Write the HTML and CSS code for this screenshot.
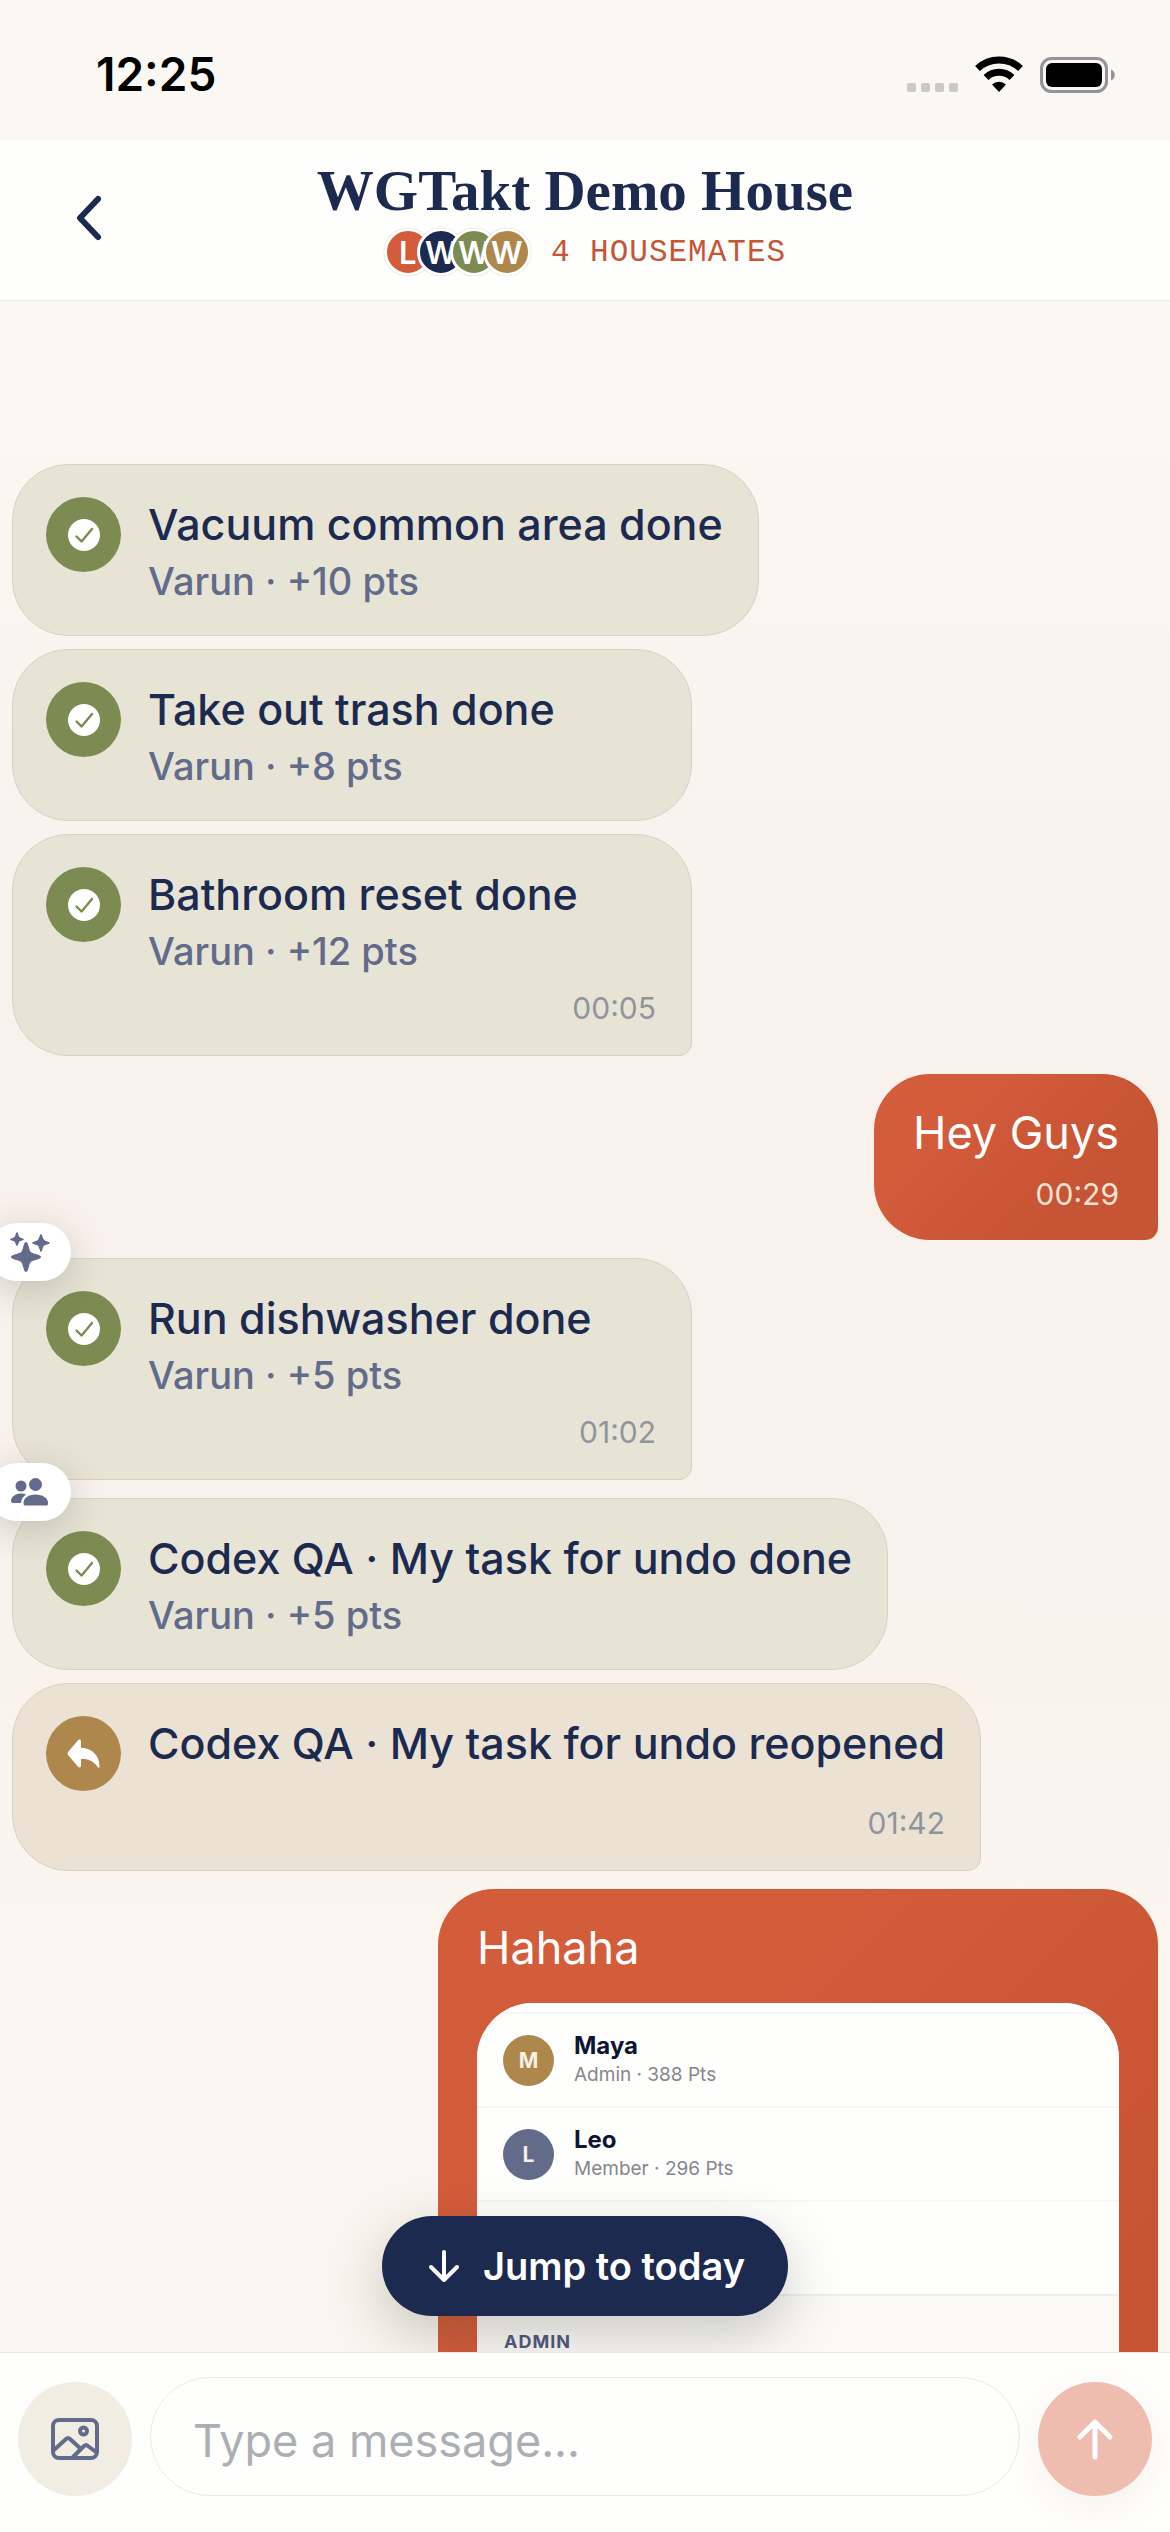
FILE: index.html
```html
<!DOCTYPE html>
<html lang="en">
<head>
    <meta charset="UTF-8">
    <meta name="viewport" content="width=device-width, initial-scale=1.0">
    <title>WGTakt Demo House</title>
    <link rel="stylesheet" href="styles.css">
</head>
<body>
    <!-- shared icons -->
    <svg class="sprite" aria-hidden="true">
        <symbol id="icon-check" viewBox="0 0 32 32">
            <circle cx="16" cy="16" r="16" fill="#fff"/>
            <path d="M8.500 17.500l5 5L24 10" fill="none" stroke="#7b8b52" stroke-width="2.400" stroke-linecap="round" stroke-linejoin="round"/>
        </symbol>
    </svg>

    <div class="status-bar">
        <span class="clock">12:25</span>
        <svg class="status-icons" width="208" height="38" viewBox="0 0 208 38" aria-hidden="true">
            <g fill="#cbc9c3">
                <rect x="0" y="28" width="9" height="9" rx="2"/>
                <rect x="14" y="28" width="9" height="9" rx="2"/>
                <rect x="28" y="28" width="9" height="9" rx="2"/>
                <rect x="42" y="28" width="9" height="9" rx="2"/>
            </g>
            <path d="M92 37l-7-7.500a10 10 0 0 1 14 0z" fill="#000"/>
            <path d="M79 22.500a19 19 0 0 1 26 0" fill="none" stroke="#000" stroke-width="7"/>
            <path d="M70.500 13.500a31.500 31.500 0 0 1 43 0" fill="none" stroke="#000" stroke-width="7"/>
            <rect x="134.500" y="3.500" width="65" height="33" rx="10" fill="none" stroke="#92949a" stroke-width="3"/>
            <rect x="139" y="8" width="56" height="24" rx="6" fill="#000"/>
            <path d="M204 14.500c5 2 5 9 0 11z" fill="#92949a"/>
        </svg>
    </div>

    <header class="chat-header">
        <button class="back-btn" type="button" aria-label="Back">
            <svg width="28" height="48" viewBox="0 0 28 48"><path d="M23 5L5 24l18 19" fill="none" stroke="#1c2a4f" stroke-width="6" stroke-linecap="round" stroke-linejoin="round"/></svg>
        </button>
        <div class="house">
            <h1>WGTakt Demo House</h1>
            <div class="members">
                <div class="avatars">
                    <span class="avatar avatar-red">L</span>
                    <span class="avatar avatar-navy">W</span>
                    <span class="avatar avatar-green">W</span>
                    <span class="avatar avatar-gold">W</span>
                </div>
                <span class="member-count">4 HOUSEMATES</span>
            </div>
        </div>
    </header>

    <main class="chat">
        <div class="group">
            <article class="bubble task">
                <div class="task-row">
                    <span class="task-icon"><svg width="32" height="32"><use href="#icon-check"/></svg></span>
                    <div>
                        <p class="task-title">Vacuum common area done</p>
                        <p class="task-meta">Varun · +10 pts</p>
                    </div>
                </div>
            </article>
            <article class="bubble task">
                <div class="task-row">
                    <span class="task-icon"><svg width="32" height="32"><use href="#icon-check"/></svg></span>
                    <div>
                        <p class="task-title">Take out trash done</p>
                        <p class="task-meta">Varun · +8 pts</p>
                    </div>
                </div>
            </article>
            <article class="bubble task last">
                <div class="task-row">
                    <span class="task-icon"><svg width="32" height="32"><use href="#icon-check"/></svg></span>
                    <div>
                        <p class="task-title">Bathroom reset done</p>
                        <p class="task-meta">Varun · +12 pts</p>
                    </div>
                </div>
                <time>00:05</time>
            </article>
        </div>

        <article class="bubble own last">
            <p class="own-text">Hey Guys</p>
            <time>00:29</time>
        </article>

        <div class="group">
            <article class="bubble task last">
                <span class="badge">
                    <svg width="40" height="40" viewBox="0 0 40 40" fill="#636b8a">
                        <path d="M16 10c1.500 0 2 2 3 5.500 1 4 1.500 5 5 6 4 1.200 7 2 7 3.500s-3 2.300-7 3.500c-3.500 1-4 2-5 6-1 3.500-1.500 5.500-3 5.500s-2-2-3-5.500c-1-4-1.500-5-5-6C4 27.300 1 26.500 1 25s3-2.300 7-3.500c3.500-1 4-2 5-6 1-3.500 1.500-5.500 3-5.500z"/>
                        <path d="M7 0c1 0 1.500 4 2.500 5S14 6.500 14 7.500 10.500 8.500 9.500 9.500 8 14 7 14s-1.500-3.500-2.500-4.500S0 8.500 0 7.500 3.500 6 4.500 5 6 0 7 0z"/>
                        <path d="M31 2c1 0 1.800 4.500 3 5.700S40 10 40 11s-4.800 1.600-6 2.800S32 20 31 20s-1.800-5-3-6.200S22 12 22 11s4.800-2.100 6-3.300S30 2 31 2z"/>
                    </svg>
                </span>
                <div class="task-row">
                    <span class="task-icon"><svg width="32" height="32"><use href="#icon-check"/></svg></span>
                    <div>
                        <p class="task-title">Run dishwasher done</p>
                        <p class="task-meta">Varun · +5 pts</p>
                    </div>
                </div>
                <time>01:02</time>
            </article>
        </div>

        <div class="group">
            <article class="bubble task">
                <span class="badge">
                    <svg width="40" height="28" viewBox="0 0 40 28" fill="#636b8a">
                        <circle cx="11" cy="8" r="5.500"/>
                        <circle cx="25.500" cy="6.500" r="6.500"/>
                        <path d="M16 16.500c-3 2.200-4.500 4.500-5 8.500H3.500C1.500 25 1 24 1 22.500 1.500 18.500 6 15.500 10.500 15.500c2 0 4 .2 5.500 1z"/>
                        <path d="M13.500 25c0-5 5-8.500 12-8.500s12.500 3.500 12.500 8.500c0 2-.5 2.500-2.500 2.500H16c-2 0-2.500-.5-2.500-2.500z"/>
                    </svg>
                </span>
                <div class="task-row">
                    <span class="task-icon"><svg width="32" height="32"><use href="#icon-check"/></svg></span>
                    <div>
                        <p class="task-title">Codex QA · My task for undo done</p>
                        <p class="task-meta">Varun · +5 pts</p>
                    </div>
                </div>
            </article>
            <article class="bubble task reopened last">
                <div class="task-row">
                    <span class="task-icon">
                        <svg width="34" height="30" viewBox="0 0 34 30"><path d="M14 2.500v6.200C26 9.500 32.500 17 32.500 27.500c0 1.500-1 1.500-1.800.5C27 22.500 22 20 14 19.800v6.700c0 2-1.500 2.500-3 1.200L1.500 16.500c-1.200-1.300-1.200-2.700 0-4L11 1.300C12.500 0 14 .5 14 2.500z" fill="#fff"/></svg>
                    </span>
                    <div>
                        <p class="task-title">Codex QA · My task for undo reopened</p>
                    </div>
                </div>
                <time>01:42</time>
            </article>
        </div>

        <article class="bubble own photo-message">
            <p class="own-text">Hahaha</p>
            <div class="photo">
                <div class="person">
                    <span class="person-avatar gold">M</span>
                    <div>
                        <p class="person-name">Maya</p>
                        <p class="person-role">Admin · 388 Pts</p>
                    </div>
                </div>
                <div class="person">
                    <span class="person-avatar slate">L</span>
                    <div>
                        <p class="person-name">Leo</p>
                        <p class="person-role">Member · 296 Pts</p>
                    </div>
                </div>
                <div class="person"></div>
                <p class="photo-section">ADMIN</p>
            </div>
        </article>

        <button class="jump-btn" type="button">
            <svg width="30" height="32" viewBox="0 0 30 32"><path d="M15 2v28M2 17l13 13 13-13" fill="none" stroke="#fff" stroke-width="4" stroke-linecap="round" stroke-linejoin="round"/></svg>
            Jump to today
        </button>
    </main>

    <footer class="composer">
        <button class="photo-btn" type="button" aria-label="Add photo">
            <svg width="48" height="46" viewBox="0 0 48 46" fill="none" stroke="#636b8a" stroke-width="4" stroke-linejoin="round" stroke-linecap="round">
                <rect x="2" y="4" width="44" height="38" rx="6"/>
                <circle cx="32.500" cy="15" r="3.500"/>
                <path d="M3 34l12-11c1.500-1.400 2.500-1.400 4 0l11 10M22 41l11-11c1.500-1.400 2.500-1.400 4 0l8 6"/>
            </svg>
        </button>
        <input class="message-input" type="text" placeholder="Type a message..." aria-label="Message">
        <button class="send-btn" type="button" aria-label="Send">
            <svg width="38" height="42" viewBox="0 0 38 42"><path d="M19 39V4M4 19L19 4l15 15" fill="none" stroke="#fff" stroke-width="5" stroke-linecap="round" stroke-linejoin="round"/></svg>
        </button>
    </footer>
</body>
</html>
```
FILE: styles.css
```css
* {
    box-sizing: border-box;
}

body {
    margin: 0;
    height: 100vh;
    display: flex;
    flex-direction: column;
    overflow: hidden;
    font-family: Inter, sans-serif;
    color: #1c2a4f;
    background: linear-gradient(#fbf8f3 0%, #fbf7f1 15%, #f9f1eb 42%, #f9f1eb 58%, #faf6ef 78%, #faf6ef 100%);
}

h1,
p {
    margin: 0;
}

button {
    border: none;
    padding: 0;
    font-family: inherit;
    cursor: pointer;
}

.sprite {
    display: none;
}

/* status bar */
.status-bar {
    display: flex;
    justify-content: space-between;
    align-items: center;
    height: 140px;
    padding: 8px 55px 0 96px;
}

.clock {
    font-size: 46px;
    font-weight: 600;
    color: #000;
}

/* header */
.chat-header {
    display: grid;
    grid-template-columns: 1fr auto 1fr;
    align-items: center;
    padding: 19px 35px 24px;
    background-color: #fefefd;
    border-bottom: 1px solid #ebe8e3;
}

.back-btn {
    display: flex;
    align-items: center;
    justify-content: center;
    width: 108px;
    height: 108px;
    background: none;
}

.house {
    display: flex;
    flex-direction: column;
    align-items: center;
    gap: 5px;
}

.house h1 {
    font-family: "Liberation Serif", serif;
    font-size: 57px;
    font-weight: 700;
    line-height: 64px;
}

.members {
    display: flex;
    align-items: center;
    gap: 20px;
}

.avatars {
    display: flex;
}

.avatar {
    display: flex;
    align-items: center;
    justify-content: center;
    width: 48px;
    height: 48px;
    margin-left: -15px;
    border: 3px solid #fff;
    border-radius: 50%;
    box-shadow: 0 0 1px rgba(120, 110, 90, 0.5);
    font-size: 31px;
    font-weight: 600;
    color: #fff;
}

.avatar:first-child {
    margin-left: 0;
}

.avatar-red {
    background-color: #d35c3b;
}

.avatar-navy {
    background-color: #1c2a4f;
}

.avatar-green {
    background-color: #7b8b52;
}

.avatar-gold {
    background-color: #ae874c;
}

.member-count {
    font-family: "Liberation Mono", monospace;
    font-size: 31px;
    letter-spacing: 1px;
    color: #c75434;
}

/* messages */
.chat {
    position: relative;
    flex: 1 1 0;
    min-height: 0;
    overflow: hidden;
    display: flex;
    flex-direction: column;
    gap: 18px;
    padding: 163px 12px 0;
}

.group {
    display: flex;
    flex-direction: column;
    align-items: flex-start;
    gap: 13px;
}

.bubble {
    position: relative;
    flex-shrink: 0;
    border-radius: 56px;
}

.bubble.last {
    border-bottom-right-radius: 13px;
}

.bubble time {
    display: block;
    margin-top: 14px;
    font-size: 30px;
    line-height: 36px;
    text-align: right;
}

.task {
    min-width: 680px;
    padding: 32px 35px 29px 33px;
    background-color: #e7e4d6;
    border: 1px solid #d6d2c6;
}

.task time {
    color: #90959b;
}

.task-row {
    display: flex;
    align-items: flex-start;
    gap: 27px;
}

.task-icon {
    display: flex;
    align-items: center;
    justify-content: center;
    flex-shrink: 0;
    width: 75px;
    height: 75px;
    border-radius: 50%;
    background-color: #7b8b52;
}

.task-title {
    font-size: 43px;
    font-weight: 500;
    line-height: 54px;
}

.task-meta {
    margin-top: 6px;
    font-size: 38px;
    font-weight: 500;
    line-height: 49px;
    color: #636b8a;
}

.reopened {
    background-color: #ebe2d4;
}

.reopened .task-icon {
    background-color: #ae874c;
}

.badge {
    position: absolute;
    top: -36px;
    left: -25px;
    display: flex;
    align-items: center;
    justify-content: center;
    width: 83px;
    height: 58px;
    border-radius: 29px;
    background-color: #fff;
    box-shadow: 0 8px 36px rgba(60, 60, 50, 0.22);
}

.own {
    align-self: flex-end;
    padding: 30px 39px 28px;
    background: linear-gradient(135deg, #d35c3b 25%, #c75434 70%);
    color: #fff;
}

.own time {
    color: #f0e3d5;
}

.own-text {
    font-size: 45px;
    line-height: 58px;
}

/* photo shared in the chat */
.photo-message {
    width: 720px;
    max-width: 100%;
    padding-bottom: 39px;
}

.photo {
    margin-top: 26px;
    padding-top: 9px;
    height: 640px;
    overflow: hidden;
    border-radius: 56px;
    background-color: #faf9f8;
    color: #0d1533;
}

.photo::before {
    content: "";
    display: block;
    height: 9px;
    margin-top: -9px;
    background-color: #fff;
}

.person {
    display: flex;
    align-items: center;
    gap: 20px;
    height: 94px;
    padding-left: 26px;
    border-top: 2px solid #f8f6f4;
    background-color: #fefefd;
}

.person-avatar {
    display: flex;
    align-items: center;
    justify-content: center;
    width: 51px;
    height: 51px;
    border-radius: 50%;
    font-size: 21px;
    font-weight: 700;
    color: #f5efe6;
}

.person-avatar.gold {
    background-color: #ae874c;
}

.person-avatar.slate {
    background-color: #636b8a;
}

.person-name {
    font-size: 24px;
    font-weight: 700;
    line-height: 30px;
}

.person-role {
    font-size: 19px;
    line-height: 28px;
    color: #85878c;
}

.photo-section {
    height: 200px;
    padding: 34px 27px;
    border-top: 2px solid #f0eeeb;
    font-size: 18px;
    font-weight: 700;
    letter-spacing: 1px;
    line-height: 24px;
    color: #4f587c;
}

.jump-btn {
    position: absolute;
    bottom: 36px;
    left: 50%;
    transform: translateX(-50%);
    display: flex;
    align-items: center;
    gap: 24px;
    height: 100px;
    padding: 0 43px 0 47px;
    border-radius: 50px;
    background-color: #1c2a4f;
    box-shadow: 0 18px 54px rgba(60, 55, 35, 0.25);
    font-size: 38px;
    font-weight: 600;
    color: #fff;
    white-space: nowrap;
}

/* composer */
.composer {
    position: relative;
    display: flex;
    align-items: flex-end;
    gap: 18px;
    padding: 24px 18px 36px;
    background-color: #fefefd;
    border-top: 1px solid #ebe8e3;
}

.photo-btn,
.send-btn {
    display: flex;
    align-items: center;
    justify-content: center;
    flex-shrink: 0;
    width: 114px;
    height: 114px;
    border-radius: 50%;
}

.photo-btn {
    background-color: #f2ede3;
}

.message-input {
    flex: 1;
    min-width: 0;
    height: 119px;
    padding: 8px 42px 0;
    border: 1px solid #eee9e5;
    border-radius: 60px;
    background-color: #fefefd;
    font-family: inherit;
    font-size: 45px;
    color: #1c2a4f;
}

.message-input::placeholder {
    color: #abafb3;
    opacity: 1;
}

.send-btn {
    background-color: #efbdb0;
    box-shadow: 0 12px 36px rgba(200, 150, 110, 0.12);
}
```
